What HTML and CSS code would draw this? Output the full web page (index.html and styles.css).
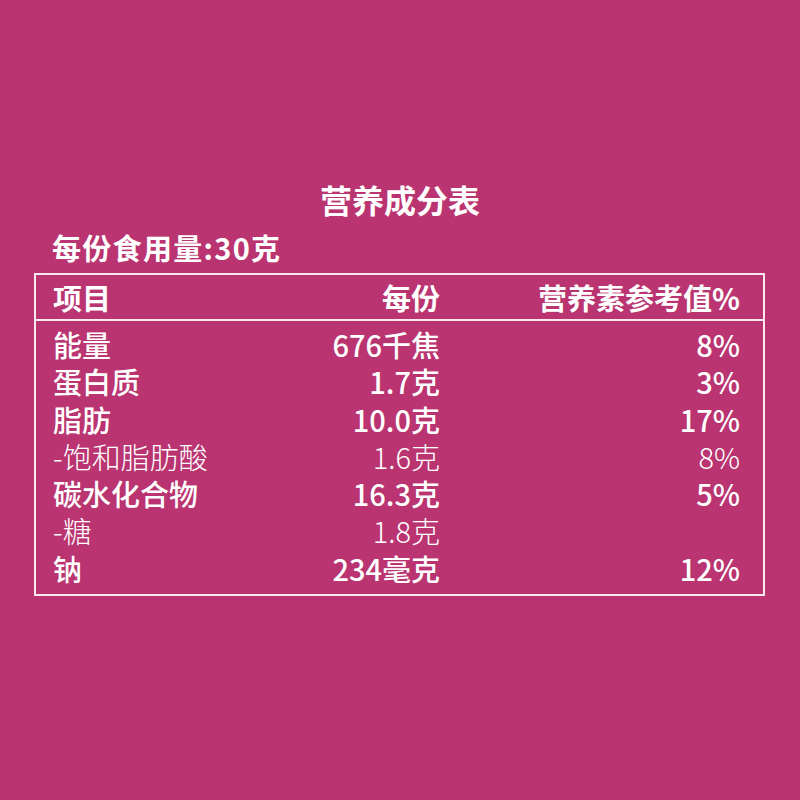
FILE: index.html
```html
<!DOCTYPE html>
<html lang="zh">
<head>
<meta charset="utf-8">
<link rel="stylesheet" href="styles.css">
</head>
<body>
<div class="page">
  <h1 class="title">营养成分表</h1>
  <div class="serving">每份食用量:30克</div>
  <div class="table">
    <div class="row head">
      <span class="c1">项目</span><span class="c2">每份</span><span class="c3">营养素参考值%</span>
    </div>
    <div class="body">
      <div class="row"><span class="c1">能量</span><span class="c2">676千焦</span><span class="c3">8%</span></div>
      <div class="row"><span class="c1">蛋白质</span><span class="c2">1.7克</span><span class="c3">3%</span></div>
      <div class="row"><span class="c1">脂肪</span><span class="c2">10.0克</span><span class="c3">17%</span></div>
      <div class="row sub"><span class="c1">-饱和脂肪酸</span><span class="c2">1.6克</span><span class="c3">8%</span></div>
      <div class="row"><span class="c1">碳水化合物</span><span class="c2">16.3克</span><span class="c3">5%</span></div>
      <div class="row sub"><span class="c1">-糖</span><span class="c2">1.8克</span><span class="c3"></span></div>
      <div class="row"><span class="c1">钠</span><span class="c2">234毫克</span><span class="c3">12%</span></div>
    </div>
  </div>
</div>
</body>
</html>
```
FILE: styles.css
```css
html, body {
  margin: 0;
  padding: 0;
  background: #b93470;
}
body {
  width: 800px;
  height: 800px;
  color: #fff;
  font-family: "Noto Sans CJK SC", "Noto Sans", sans-serif;
}
.page {
  display: flex;
  flex-direction: column;
  padding: 180px 34px 0 34px;
}
.title {
  margin: 0;
  font-size: 32px;
  font-weight: 700;
  line-height: 38px;
  text-align: center;
}
.serving {
  margin: 12px 0 0 18px;
  font-size: 29px;
  font-weight: 700;
  line-height: 34px;
  letter-spacing: 1.3px;
}
.table {
  margin-top: 9px;
  border: 2px solid #fbe9f0;
  width: 727px;
}
.row {
  display: grid;
  grid-template-columns: 207px 180px 300px;
  padding: 0 0 0 17px;
  font-size: 29px;
  line-height: 37.3px;
  font-weight: 500;
}
.row .c2, .row .c3 { text-align: right; }
.head {
  font-weight: 700;
  font-size: 29px;
  line-height: 44px;
  border-bottom: 2px solid #fbe9f0;
}
.body {
  padding: 5px 0 7px;
}
.sub {
  font-weight: 300;
}
```
